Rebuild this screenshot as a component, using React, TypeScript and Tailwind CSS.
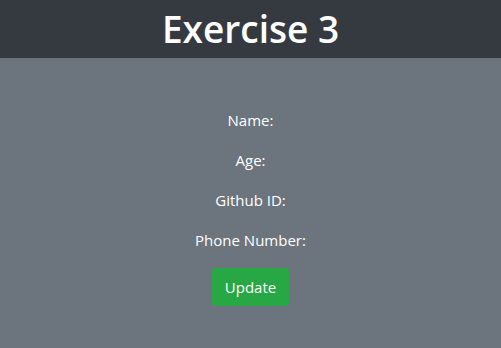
export default function App() {
  const fields = ['Name:', 'Age:', 'Github ID:', 'Phone Number:']

  return (
    <div
      className="h-screen flex flex-col text-white"
      style={{ fontFamily: '"Open Sans", "Noto Sans", sans-serif' }}
    >
      <header className="bg-[#343a40] h-[58px] shrink-0 flex items-center justify-center">
        <h1 className="text-[37px] leading-[48px] font-semibold">Exercise 3</h1>
      </header>

      <main className="flex-1 bg-[#6c757d] pt-[50px] flex flex-col items-center">
        {fields.map((f) => (
          <p key={f} className="text-[15px] leading-6 mb-4">
            {f}
          </p>
        ))}
        <button className="bg-[#28a745] text-white rounded px-[13px] h-[38px] text-[15px] leading-6">
          Update
        </button>
      </main>
    </div>
  )
}
